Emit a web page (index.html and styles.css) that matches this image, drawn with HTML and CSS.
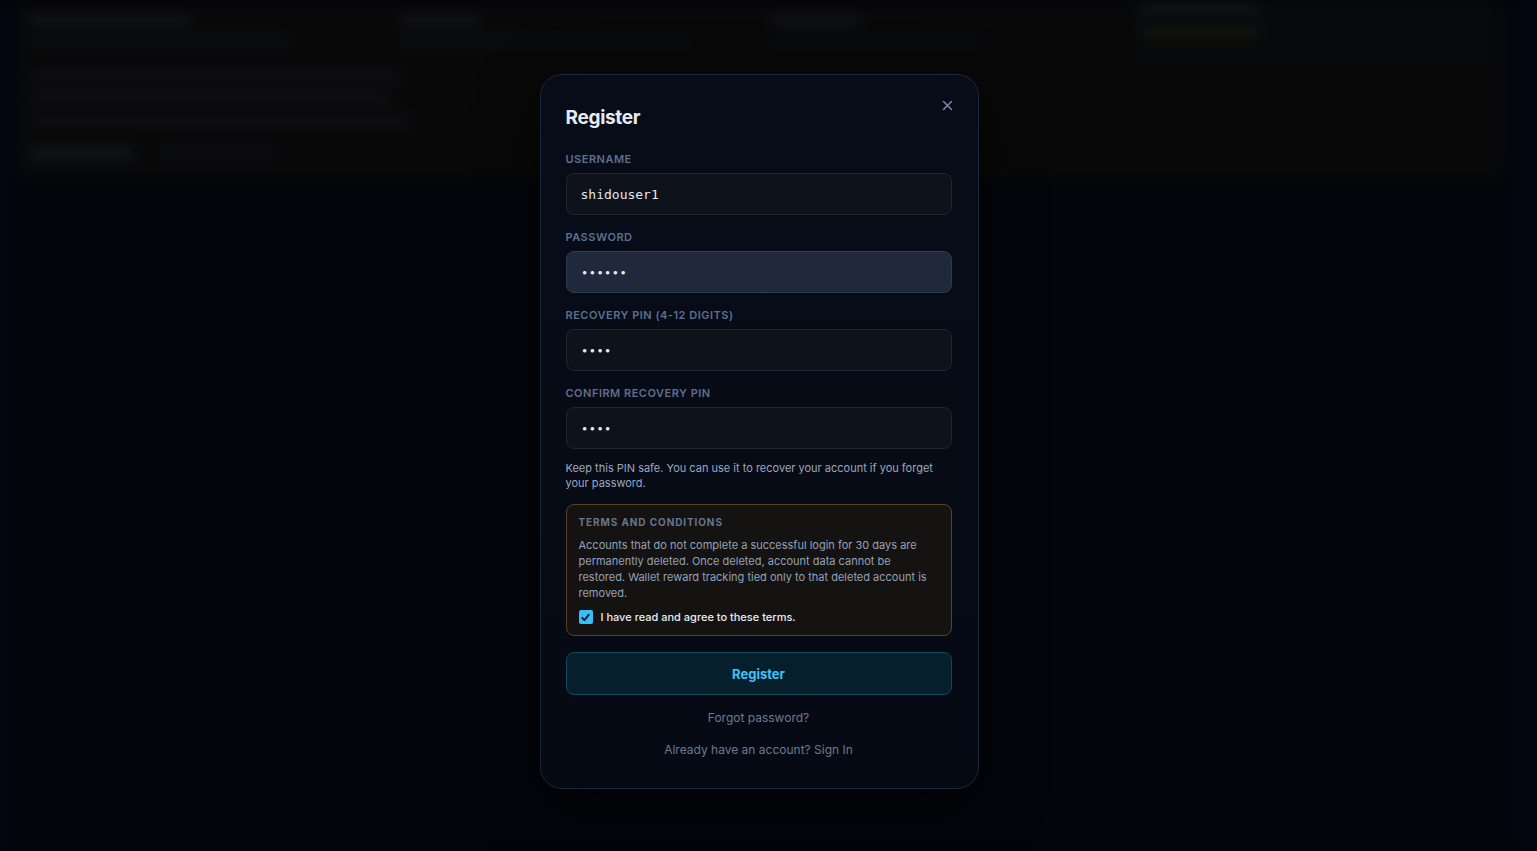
FILE: index.html
```html
<!DOCTYPE html>
<html lang="en">
<head>
<meta charset="utf-8">
<title>Register</title>
<link rel="stylesheet" href="styles.css">
</head>
<body>
<div class="page">
  <div class="hero">
    <div class="hero-cols">
      <div class="col">
        <div class="bar h w160"></div>
        <div class="bar s w260"></div>
      </div>
      <div class="col">
        <div class="bar h w80"></div>
        <div class="bar s w290"></div>
      </div>
      <div class="col">
        <div class="bar h w90"></div>
        <div class="bar s w210"></div>
      </div>
      <div class="col box">
        <div class="bar h w120"></div>
        <div class="bar amber w120"></div>
      </div>
    </div>
    <div class="bullets">
      <div class="bar b w370"></div>
      <div class="bar b w360"></div>
      <div class="bar b w380"></div>
    </div>
    <div class="btns">
      <div class="bar btn w105"></div>
      <div class="bar btn2 w115"></div>
    </div>
  </div>
  <div class="lower">
    <div class="panel p1"></div>
    <div class="panel p2"></div>
  </div>
</div>

<div class="overlay">
  <div class="modal">
    <button class="close" aria-label="Close">
      <svg width="11" height="11" viewBox="0 0 11 11"><path d="M1.5 1.5 L9.5 9.5 M9.5 1.5 L1.5 9.5" stroke="#7487a6" stroke-width="1.6" stroke-linecap="round"/></svg>
    </button>
    <h2 class="title">Register</h2>

    <div class="field">
      <label class="label">Username</label>
      <div class="input mono">shidouser1</div>
    </div>
    <div class="field">
      <label class="label">Password</label>
      <div class="input focus dots">••••••</div>
    </div>
    <div class="field">
      <label class="label">Recovery PIN (4-12 digits)</label>
      <div class="input dots">••••</div>
    </div>
    <div class="field">
      <label class="label">Confirm Recovery PIN</label>
      <div class="input dots">••••</div>
    </div>

    <p class="hint">Keep this PIN safe. You can use it to recover your account if you forget your password.</p>

    <div class="terms">
      <div class="terms-title">Terms and Conditions</div>
      <p class="terms-body">Accounts that do not complete a successful login for 30 days are permanently deleted. Once deleted, account data cannot be restored. Wallet reward tracking tied only to that deleted account is removed.</p>
      <div class="agree">
        <span class="check">
          <svg width="13" height="13" viewBox="0 0 13 13"><path d="M3.2 6.8 L5.4 9.2 L9.8 3.6" fill="none" stroke="#0b1a24" stroke-width="1.8" stroke-linecap="round" stroke-linejoin="round"/></svg>
        </span>
        <span>I have read and agree to these terms.</span>
      </div>
    </div>

    <button class="submit">Register</button>
    <div class="link">Forgot password?</div>
    <div class="link">Already have an account? Sign In</div>
  </div>
</div>
</body>
</html>
```

FILE: styles.css
```css
* { box-sizing: border-box; }
html, body { margin: 0; padding: 0; }
body {
  width: 1537px;
  height: 851px;
  overflow: hidden;
  background: #03060c;
  font-family: Inter, "Noto Sans", sans-serif;
  position: relative;
}

/* Blurred background page */
.page {
  height: 851px;
  overflow: hidden;
  padding: 0 32px 0 16px;
  background: linear-gradient(90deg, #040a18 0, #03060c 16px, #03060c 1505px, #050a18 1537px);
  filter: blur(6px);
}
.hero {
  height: 180px;
  background: #0a0a0b;
  border-radius: 0 0 10px 10px;
  padding: 12px 14px 0 14px;
}
.hero-cols {
  display: grid;
  grid-template-columns: 370px 370px 365px 1fr;
  height: 48px;
}
.col { display: flex; flex-direction: column; gap: 12px; padding-top: 4px; }
.col.box {
  padding: 0 6px;
  margin-top: -12px;
  padding-top: 4px;
  gap: 14px;
  background: #090b0e;
}
.bar { border-radius: 3px; }
.bar.h { height: 10px; background: #17181c; }
.bar.s { height: 7px; background: #101216; }
.bar.amber { height: 10px; background: #1a1811; }
.bar.b { height: 9px; background: #141519; }
.bullets { display: flex; flex-direction: column; gap: 13px; padding-top: 12px; }
.btns { display: flex; gap: 24px; padding-top: 20px; }
.bar.btn { height: 16px; background: #131518; border-radius: 5px; }
.bar.btn2 { height: 14px; background: #0e0f12; border-radius: 5px; }
.w80 { width: 80px; } .w90 { width: 90px; } .w105 { width: 105px; } .w115 { width: 115px; }
.w120 { width: 120px; } .w160 { width: 160px; } .w210 { width: 210px; } .w260 { width: 260px; }
.w290 { width: 290px; } .w360 { width: 360px; } .w370 { width: 370px; } .w380 { width: 380px; }
.lower { display: flex; gap: 40px; padding: 60px 20px 0 50px; }
.panel { border: 1px solid #07090e; border-radius: 8px; }
.p1 { width: 380px; height: 100px; }
.p2 { width: 520px; height: 420px; margin-left: 480px; margin-top: 180px; }

/* Overlay + modal */
.overlay {
  position: absolute;
  inset: 0;
  display: flex;
  justify-content: center;
  align-items: flex-start;
  padding: 74px 19px 0 0;
  background: rgba(0, 0, 0, 0.15);
}
.modal {
  position: relative;
  width: 439px;
  border: 1px solid #1b2638;
  border-radius: 22px;
  background: linear-gradient(180deg, #070c19 0%, #060b16 60%, #050913 100%);
  padding: 31px 26px 30px 25px;
  box-shadow: 0 20px 60px rgba(0,0,0,0.6);
}
.close {
  position: absolute;
  top: 23px;
  right: 23px;
  width: 14px;
  height: 14px;
  padding: 0;
  border: 0;
  background: none;
  display: flex;
  align-items: center;
  justify-content: center;
}
.title {
  margin: 0 0 22px 0;
  font-size: 19px;
  line-height: 24px;
  font-weight: 700;
  color: #e6ecf5;
  letter-spacing: -0.3px;
}
.field { margin-bottom: 15px; }
.label {
  display: block;
  font-size: 11px;
  line-height: 14px;
  font-weight: 600;
  letter-spacing: 0.5px;
  text-transform: uppercase;
  color: #5d6f8c;
  margin-bottom: 7px;
}
.input {
  height: 42px;
  border: 1px solid #1e2531;
  border-radius: 8px;
  background: #0e121b;
  padding: 0 14px;
  display: flex;
  align-items: center;
  color: #e4e8ef;
  font-family: "DejaVu Sans Mono", "Liberation Mono", monospace;
  font-size: 13px;
}
.input.focus {
  background: #1f293b;
  border-color: #2d3a50;
}
.input.dots {
  font-family: Inter, "Noto Sans", sans-serif;
  font-size: 11px;
  letter-spacing: 1.5px;
  padding-left: 15px;
}
.hint {
  margin: -3px 0 13px 0;
  font-size: 11px;
  line-height: 15px;
  color: #9aa8bf;
}
.terms {
  border: 1px solid #5b4120;
  border-radius: 8px;
  background: #151312;
  padding: 11px 12px 11px 12px;
}
.terms-title {
  font-size: 10px;
  line-height: 13px;
  font-weight: 700;
  letter-spacing: 0.9px;
  text-transform: uppercase;
  color: #66758f;
}
.terms-body {
  margin: 8px 0 9px 0;
  font-size: 11px;
  line-height: 16px;
  color: #93a1b7;
}
.agree {
  display: flex;
  align-items: center;
  gap: 8px;
  font-size: 11px;
  line-height: 14px;
  font-weight: 500;
  color: #e8ecf2;
}
.check {
  width: 14px;
  height: 14px;
  border-radius: 2px;
  background: #38bdf8;
  display: flex;
  align-items: center;
  justify-content: center;
}
.submit {
  display: block;
  width: 100%;
  height: 43px;
  margin-top: 16px;
  border: 1px solid #0d4a5c;
  border-radius: 8px;
  background: #061f2c;
  color: #3ec3f5;
  font-family: Inter, "Noto Sans", sans-serif;
  font-size: 13px;
  font-weight: 700;
}
.link {
  text-align: center;
  font-size: 12px;
  line-height: 16px;
  color: #6a7a94;
  margin-top: 15px;
}
.link + .link { margin-top: 16px; }
```
